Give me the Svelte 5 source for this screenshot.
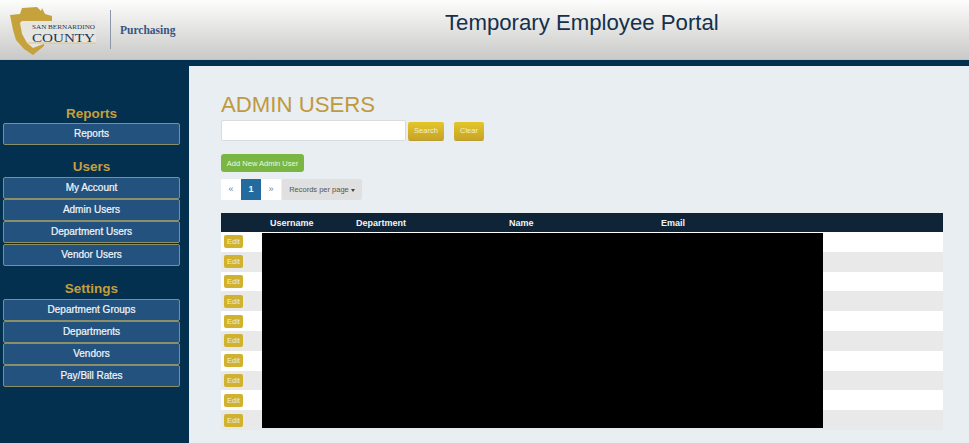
<script>
	const navGroups = [
		{ title: 'Reports', links: ['Reports'] },
		{ title: 'Users', links: ['My Account', 'Admin Users', 'Department Users', 'Vendor Users'] },
		{ title: 'Settings', links: ['Department Groups', 'Departments', 'Vendors', 'Pay/Bill Rates'] }
	];
	const rows = Array.from({ length: 10 }, (_, i) => i);
</script>

<header>
	<div class="brand">
		<svg class="logo" viewBox="0 0 100 56" width="100" height="56" aria-hidden="true">
			<path d="M22 19 H96 V41 H44 L33 46 L27 41 L22 32 Z" fill="#e6e5df" />
			<path d="M10 13 L20 12 L22 6 L37 5 L41 9 L42 6 L45 12 L52 14 L52 19 L22 19 L20 21 L22 32 L27 41 L33 46 L44 42 L44 44 L33 53 L24 47 L16 38 L13 28 Z" fill="#c6a23c" />
			<text x="32" y="26.5" class="san" textLength="63" lengthAdjust="spacingAndGlyphs">SAN BERNARDINO</text>
			<text x="32" y="39.8" class="county" textLength="63" lengthAdjust="spacingAndGlyphs">COUNTY</text>
			<path d="M27 41 H96" stroke="#d8c48a" stroke-width="1" />
		</svg>
		<span class="divider"></span>
		<span class="dept">Purchasing</span>
	</div>
	<h1>Temporary Employee Portal</h1>
</header>

<div class="layout">
	<nav>
		{#each navGroups as group}
			<h2>{group.title}</h2>
			{#each group.links as link}
				<a href="#top">{link}</a>
			{/each}
		{/each}
	</nav>

	<main>
		<h3>ADMIN USERS</h3>
		<form class="search">
			<input type="text" />
			<button type="button" class="gold">Search</button>
			<button type="button" class="gold clear">Clear</button>
		</form>
		<button type="button" class="add">Add New Admin User</button>
		<div class="pager">
			<span class="page">«</span>
			<span class="page active">1</span>
			<span class="page">»</span>
			<span class="per-page">Records per page <i class="caret"></i></span>
		</div>

		<div class="table-wrap">
			<table>
				<thead>
					<tr>
						<th class="c-edit"></th>
						<th class="c-user">Username</th>
						<th class="c-dept">Department</th>
						<th class="c-name">Name</th>
						<th>Email</th>
					</tr>
				</thead>
				<tbody>
					{#each rows as r}
						<tr>
							<td><span class="edit">Edit</span></td>
							<td></td>
							<td></td>
							<td></td>
							<td></td>
						</tr>
					{/each}
				</tbody>
			</table>
			<div class="redacted"></div>
		</div>
	</main>
</div>

<style>
	:global(body) {
		background: #e9eef3;
		font-family: 'Liberation Sans', Arial, sans-serif;
	}
	header {
		height: 60px;
		display: flex;
		background: linear-gradient(#fdfdfd, #f0f0ef 25%, #c9c9c8);
		border-bottom: 1px solid #b9c4cc;
		box-sizing: border-box;
	}
	.brand {
		display: flex;
		align-items: center;
		width: 445px;
	}
	.logo {
		flex: none;
	}
	.san {
		font: 7px 'Liberation Serif', serif;
		fill: #1f3560;
	}
	.county {
		font: 13.4px 'Liberation Serif', serif;
		fill: #1f3560;
	}
	.divider {
		width: 1px;
		height: 39px;
		background: #8b95ab;
		margin: 0 9px 0 10px;
	}
	.dept {
		font: bold 11.5px 'Liberation Serif', serif;
		color: #3a5480;
	}
	h1 {
		margin: 9px 0 0;
		font-size: 22.2px;
		font-weight: 400;
		line-height: 28px;
		color: #14304d;
	}
	.layout {
		display: grid;
		grid-template-columns: 189px 1fr;
		background: #04304f;
		height: 383px;
		overflow: hidden;
	}
	nav {
		padding: 45px 9px 0 3px;
		text-align: center;
	}
	h2 {
		margin: 0 0 1px;
		color: #c49f3c;
		font-size: 13.5px;
		line-height: 17px;
	}
	nav h2:not(:first-child) {
		margin-top: 13px;
		margin-bottom: 2px;
	}
	nav h2:last-of-type {
		margin-top: 14px;
	}
	nav a {
		display: block;
		height: 22px;
		line-height: 20px;
		box-sizing: border-box;
		background: #24527f;
		border: 1px solid #8b8f68;
		border-radius: 2px;
		color: #f2f7fb;
		font-size: 10px;
		-webkit-text-stroke: 0.2px #f2f7fb;
		text-decoration: none;
		margin-bottom: 0.2px;
	}
	main {
		background: #e9eef3;
		margin-top: 6px;
		padding: 26px 26px 0 32px;
		min-width: 0;
	}
	h3 {
		margin: 0;
		color: #c0993f;
		font-size: 22.2px;
		font-weight: 400;
		line-height: 26px;
	}
	.search {
		display: flex;
		align-items: center;
		margin-top: 2px;
	}
	input {
		width: 185px;
		height: 21px;
		box-sizing: border-box;
		border: 1px solid #d9dcdf;
		border-radius: 2px;
		background: #fff;
		padding: 0;
		margin: 0;
	}
	button {
		font-family: inherit;
		border: 0;
		padding: 0;
		color: #f5efcf;
		font-size: 7.5px;
	}
	.gold {
		width: 36px;
		height: 18px;
		margin-left: 2px;
		border-radius: 2px;
		background: linear-gradient(#e3c62a, #c7a425);
		box-shadow: 0 1px 0 #b99c35;
	}
	.clear {
		width: 30px;
		margin-left: 10px;
	}
	.add {
		display: block;
		width: 83px;
		height: 18px;
		margin-top: 13px;
		border-radius: 3px;
		background: #7ab642;
		color: #eef6e0;
	}
	.pager {
		display: flex;
		margin-top: 7px;
		height: 21px;
		line-height: 21px;
		font-size: 7.5px;
	}
	.page {
		width: 20px;
		text-align: center;
		background: #fff;
		color: #808080;
		font-size: 9px;
	}
	.active {
		background: #236a9e;
		color: #f4f8fb;
		font-weight: 700;
	}
	.per-page {
		margin-left: 1px;
		width: 80px;
		text-align: center;
		background: #e0e0e0;
		color: #555;
		border-radius: 2px;
	}
	.caret {
		display: inline-block;
		vertical-align: middle;
		border-top: 3px solid #444;
		border-left: 2.5px solid transparent;
		border-right: 2.5px solid transparent;
	}
	.table-wrap {
		position: relative;
		margin-top: 13px;
		width: 722px;
	}
	table {
		width: 100%;
		table-layout: fixed;
		border-collapse: collapse;
	}
	thead tr {
		height: 19px;
		background: #0f2436;
		color: #f1f4f7;
		font-size: 9px;
		text-align: left;
	}
	th {
		padding: 0;
	}
	.c-edit {
		width: 49px;
	}
	.c-user {
		width: 86px;
	}
	.c-dept {
		width: 153px;
	}
	.c-name {
		width: 152px;
	}
	tbody tr {
		height: 19.8px;
		background: #fff;
	}
	tbody tr:nth-child(even) {
		background: #e9e9e9;
	}
	td {
		padding: 0;
	}
	.edit {
		display: block;
		margin-left: 3px;
		width: 19px;
		height: 13px;
		line-height: 13px;
		text-align: center;
		font-size: 7.5px;
		color: #f6efc8;
		background: #d0b22e;
		border-radius: 2px;
	}
	.redacted {
		position: absolute;
		left: 41px;
		top: 20px;
		width: 561px;
		height: 195px;
		background: #000;
	}
</style>
